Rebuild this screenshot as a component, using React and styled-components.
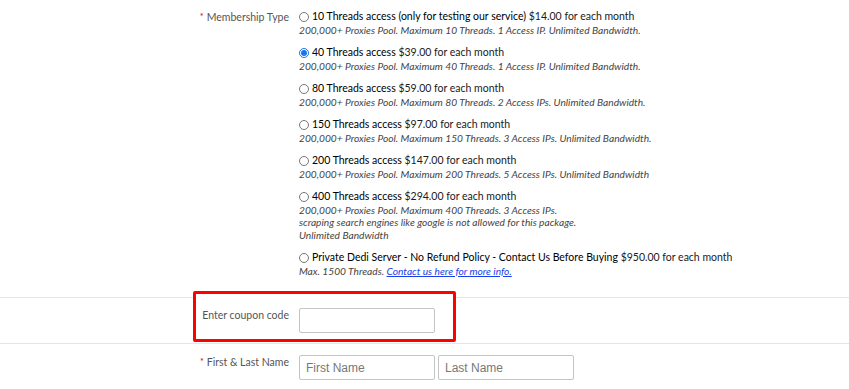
import styled, { createGlobalStyle } from 'styled-components'

const GlobalStyle = createGlobalStyle`
  body {
    margin: 0;
    background: #fff;
    font-family: Lato, "Open Sans", sans-serif;
    color: #222;
  }
`

const Form = styled.form`
  width: 849px;
`

const Row = styled.div`
  position: relative;
  display: grid;
  grid-template-columns: 289px 1fr;
  column-gap: 10px;
  padding: ${p => p.$pad || '10px 0 20px'};
  border-bottom: ${p => (p.$last ? 'none' : '1px solid #e6e6e6')};
`

const Label = styled.label`
  position: relative;
  z-index: 1;
  text-align: right;
  font-size: 10.5px;
  line-height: 14px;
  color: #555;
  padding-top: ${p => p.$top || '0'};
`

const Required = styled.span`
  color: #c00;
  font-size: 9px;
  margin-right: 3px;
  vertical-align: top;
`

const Options = styled.div`
  display: flex;
  flex-direction: column;
  gap: 10px;
`

const Option = styled.div`
  display: flex;
  flex-direction: column;
`

const Title = styled.label`
  display: flex;
  align-items: center;
  font-size: 10.5px;
  line-height: 13.5px;
  color: #1a1a1a;
  white-space: nowrap;

  b {
    font-weight: 400;
    color: #000;
  }
`

const Radio = styled.input`
  width: 10px;
  height: 10px;
  margin: 0 3px 0 0;
  accent-color: #1b75e8;
`

const Desc = styled.div`
  font-size: 10.2px;
  font-style: italic;
  line-height: 12.5px;
  color: #444;
  white-space: nowrap;

  a {
    color: #1a3ee8;
  }
`

const Coupon = styled.div`
  position: absolute;
  left: 193px;
  top: -7px;
  width: 257px;
  height: 45px;
  border: 3px solid #f00;
  border-radius: 2px;
  background: #fff;
`

const Fields = styled.div`
  position: relative;
  z-index: 1;
  display: flex;
  gap: 3px;
`

const Input = styled.input`
  box-sizing: border-box;
  width: 136px;
  height: 25px;
  border: 1px solid #c4c4c4;
  border-radius: 2px;
  padding: 0 6px;
  font-family: "Liberation Sans", Arial, sans-serif;
  font-size: 12px;
  color: #333;

  &::placeholder {
    color: #777;
  }
`

const plans = [
  { title: '10 Threads access (only for testing our service)', price: '$14.00', desc: ['200,000+ Proxies Pool. Maximum 10 Threads. 1 Access IP. Unlimited Bandwidth.'] },
  { title: '40 Threads access', price: '$39.00', desc: ['200,000+ Proxies Pool. Maximum 40 Threads. 1 Access IP. Unlimited Bandwidth.'], checked: true },
  { title: '80 Threads access', price: '$59.00', desc: ['200,000+ Proxies Pool. Maximum 80 Threads. 2 Access IPs. Unlimited Bandwidth.'] },
  { title: '150 Threads access', price: '$97.00', desc: ['200,000+ Proxies Pool. Maximum 150 Threads. 3 Access IPs. Unlimited Bandwidth.'] },
  { title: '200 Threads access', price: '$147.00', desc: ['200,000+ Proxies Pool. Maximum 200 Threads. 5 Access IPs. Unlimited Bandwidth'] },
  {
    title: '400 Threads access',
    price: '$294.00',
    desc: [
      '200,000+ Proxies Pool. Maximum 400 Threads. 3 Access IPs.',
      'scraping search engines like google is not allowed for this package.',
      'Unlimited Bandwidth',
    ],
  },
]

const App = () => {
  return (
    <>
      <GlobalStyle />
      <Form>
        <Row>
          <Label><Required>*</Required>Membership Type</Label>
          <Options>
            {plans.map((p, i) => (
              <Option key={i}>
                <Title>
                  <Radio type="radio" name="level" defaultChecked={p.checked} />
                  <span><b>{p.title}</b> {p.price} for each month</span>
                </Title>
                {p.desc.map((d, j) => <Desc key={j}>{d}</Desc>)}
              </Option>
            ))}
            <Option>
              <Title>
                <Radio type="radio" name="level" />
                <span><b>Private Dedi Server - No Refund Policy - Contact Us Before Buying</b> $950.00 for each month</span>
              </Title>
              <Desc>Max. 1500 Threads. <a href="#">Contact us here for more info.</a></Desc>
            </Option>
          </Options>
        </Row>
        <Row $pad="10px 0 10px">
          <Coupon />
          <Label>Enter coupon code</Label>
          <Fields>
            <Input type="text" />
          </Fields>
        </Row>
        <Row $pad="11px 0 10px" $last>
          <Label><Required>*</Required>First &amp; Last Name</Label>
          <Fields>
            <Input type="text" placeholder="First Name" />
            <Input type="text" placeholder="Last Name" />
          </Fields>
        </Row>
      </Form>
    </>
  )
}

export default App
